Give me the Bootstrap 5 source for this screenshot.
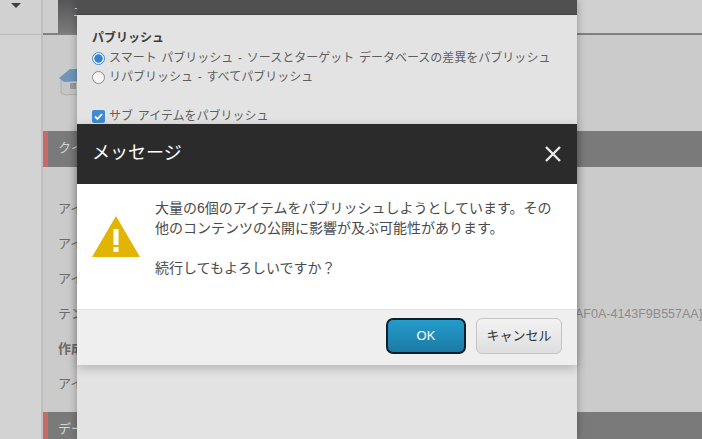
<!DOCTYPE html>
<html lang="ja">
<head>
<meta charset="utf-8">
<title>メッセージ</title>
<link href="https://cdn.jsdelivr.net/npm/bootstrap@5.3.0/dist/css/bootstrap.min.css" rel="stylesheet">
<style>
html,body{height:439px;overflow:hidden}
body{background:#cdcdcd;font-family:"Liberation Sans","Noto Sans CJK JP",sans-serif;font-size:13px;color:#4b4b4b;position:relative;width:702px}
.stage{height:439px}
.side-rail{width:43px;background:#d3d3d3;border-right:2px solid #bfbfbf;flex:none}
.side-top{height:35px;border-bottom:1px solid #bcbcbc;background:#d1d1d1;padding:3px 0 0 11px}
.caret-mark{display:block;width:0;height:0;border-left:5px solid transparent;border-right:5px solid transparent;border-top:5px solid #3f3f3f}
.main-pane{background:#cbcbcb;min-width:0}
.tab-strip{height:35px;background:#d0d0d0;border-bottom:2px solid #808080}
.tab-cap{width:15px;background:#cecece;height:33px}
.tab-dark{width:56px;height:33px;background:linear-gradient(#565656,#7b7b7b);overflow:hidden;color:#d8d8d8;padding-left:15px;line-height:24px;font-size:13px;white-space:nowrap}
.house-row{height:96px;padding:34px 0 0 16px}
.sect-bar{height:36px;background:#7a7a7a;border-left:5px solid #c86a68;color:#d6d6d6;padding-left:10px;line-height:33px;font-size:13px}
.field-list{padding:24px 0 0 15px;height:245px;margin:0}
.field-row{height:35px;line-height:35px;color:#6a6a6a;white-space:nowrap;position:relative}
.guid-text{position:absolute;left:517px;color:#8b8b8b;font-size:12.5px;line-height:35px;top:1px;font-weight:400}
.back-dlg{position:absolute;left:77px;top:0;width:500px;height:439px;background:#e3e3e3;box-shadow:0 0 8px rgba(0,0,0,.3)}
.back-head{height:15px;background:#505050;border-bottom:1px solid #444}
.back-body{padding:15px 15px 0}
.back-title{font-weight:700;line-height:17px;font-size:12px;color:#3c3c3c;margin-bottom:2px}
.opt-line{display:flex;align-items:center;line-height:19px;height:19px;gap:4px;font-size:12px;color:#5f5f5f;white-space:pre;word-spacing:1.4px}
.opt-gap{margin-top:19px;height:20px}
.radio-on,.radio-off{width:13px;height:13px;border-radius:50%;background:#f6f6f6;border:1px solid #8a8a8a;flex:none;display:block}
.radio-on{border-color:#3f8bcf;background:radial-gradient(circle,#2f86d4 0 3.9px,#f6f6f6 4.5px)}
.check-on{width:13px;height:13px;border-radius:2px;background:#3f8bcf;flex:none;display:flex}
.front-dlg{position:absolute;left:77px;top:124px;width:500px;height:241px;background:#fff;box-shadow:0 3px 10px rgba(0,0,0,.22)}
.front-head{height:60px;background:#2b2b2b;color:#fff;padding:0 15px 2px;font-size:18px}
.front-body{height:125px;padding:14px 15px 0;color:#4a4a4a}
.msg-text{font-size:14px;line-height:20px;margin:0;width:404px}
.warn-wrap{width:63px;flex:none;padding-top:18px}
.front-foot{height:56px;background:#efefef;border-top:1px solid #e4e4e4;padding:0 15px 3px;gap:10px}
.act-ok{width:80px;height:36px;border:2px solid #141e28;border-radius:7px;background:linear-gradient(#249ccc,#1b7aa5);color:#fff;font-size:13px;padding:0;--bs-btn-hover-color:#fff}
.act-cancel{width:86px;height:36px;border:1px solid #c4c4c4;border-radius:6px;background:linear-gradient(#f3f3f3,#dedede);color:#333;font-size:13px;padding:0}
.x-btn{background:none;border:0;padding:0;display:flex;margin-top:2px}
</style>
</head>
<body>
<div class="stage d-flex">
  <div class="side-rail"><div class="side-top"><span class="caret-mark"></span></div></div>
  <div class="main-pane flex-grow-1">
    <div class="tab-strip d-flex"><div class="tab-cap"></div><div class="tab-dark">エ</div></div>
    <div class="house-row">
      <svg width="20" height="27" viewBox="0 0 20 27"><path d="M2 11v13l5 2 13-1V11z" fill="#c6c6c6" stroke="#adadad"/><path d="M0 9 11 0h9v12L5 13z" fill="#6f95b8"/><rect x="11" y="14" width="6" height="6" fill="#9a9a9a"/></svg>
    </div>
    <div class="sect-bar">クイック</div>
    <div class="field-list">
      <div class="field-row">アイテム</div>
      <div class="field-row">アイテム</div>
      <div class="field-row">アイテム</div>
      <div class="field-row">テンプレート<span class="guid-text">AF0A-4143F9B557AA}</span></div>
      <div class="field-row fw-bold">作成日</div>
      <div class="field-row">アイテム</div>
    </div>
    <div class="sect-bar">データ</div>
  </div>
</div>

<div class="back-dlg">
  <div class="back-head"></div>
  <div class="back-body">
    <div class="back-title">パブリッシュ</div>
    <div class="opt-line"><span class="radio-on"></span>スマート パブリッシュ - ソースとターゲット データベースの差異をパブリッシュ</div>
    <div class="opt-line"><span class="radio-off"></span>リパブリッシュ - すべてパブリッシュ</div>
    <div class="opt-line opt-gap"><span class="check-on"><svg width="13" height="13" viewBox="0 0 13 13"><path d="M3 6.500 5.500 9 10 4" fill="none" stroke="#fff" stroke-width="1.8"/></svg></span>サブ アイテムをパブリッシュ</div>
  </div>
</div>

<div class="front-dlg" role="dialog">
  <div class="front-head d-flex align-items-center justify-content-between">
    <span>メッセージ</span>
    <button class="x-btn" type="button" aria-label="Close"><svg width="18" height="18" viewBox="0 0 18 18"><path d="M2 2 16 16M16 2 2 16" stroke="#e8e8e8" stroke-width="2.4"/></svg></button>
  </div>
  <div class="front-body d-flex">
    <div class="warn-wrap">
      <svg width="48" height="42" viewBox="0 0 48 42"><path d="M24 0 48 41H0z" fill="#e2b404"/><rect x="21.500" y="13" width="5" height="16" fill="#fff"/><rect x="21.500" y="31" width="5" height="5" fill="#fff"/></svg>
    </div>
    <p class="msg-text">大量の6個のアイテムをパブリッシュしようとしています。その他のコンテンツの公開に影響が及ぶ可能性があります。<br><br>続行してもよろしいですか？</p>
  </div>
  <div class="front-foot d-flex align-items-center justify-content-end">
    <button class="btn act-ok" type="button">OK</button>
    <button class="btn act-cancel" type="button">キャンセル</button>
  </div>
</div>
</body>
</html>
